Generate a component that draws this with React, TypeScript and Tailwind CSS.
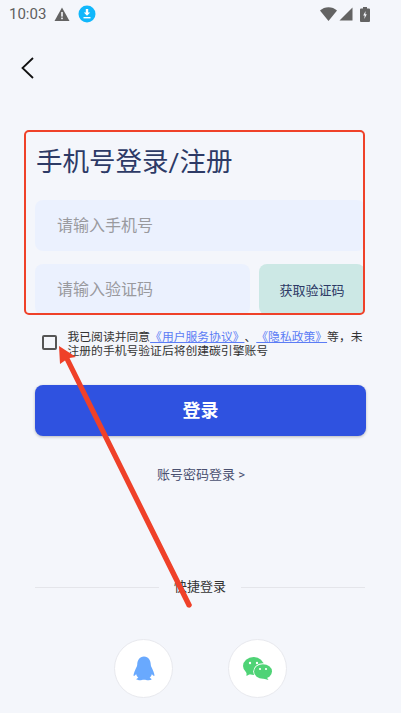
const cjk = "font-['Roboto','Noto_Sans_CJK_SC',sans-serif]"

function StatusBar() {
  return (
    <div className="flex h-[28px] items-center pl-[9px] pr-[31px]">
      <span className="text-[15px] leading-none text-[#5f5f5f]">10:03</span>
      <svg className="ml-[8px]" width="16" height="15" viewBox="0 0 16 15">
        <path d="M8 0.5 L15.5 14 H0.5 Z" fill="#636363" />
        <rect x="7.2" y="5" width="1.6" height="4.6" fill="#f4f6fb" />
        <rect x="7.2" y="10.6" width="1.6" height="1.6" fill="#f4f6fb" />
      </svg>
      <svg className="ml-[8px]" width="18" height="18" viewBox="0 0 18 18">
        <circle cx="9" cy="9" r="8.5" fill="#10b7fb" />
        <path d="M7.8 4 H10.2 V7.6 H12.2 L9 10.8 L5.8 7.6 H7.8 Z" fill="#fff" />
        <rect x="5.5" y="12" width="7" height="1.4" fill="#fff" />
      </svg>
      <div className="ml-auto flex items-center">
        <svg width="17" height="14" viewBox="0 0 17 14">
          <path d="M0 3.6 C4.5 -0.9 12.5 -0.9 17 3.6 L8.5 14 Z" fill="#636363" />
        </svg>
        <svg className="ml-[2px]" width="14" height="14" viewBox="0 0 14 14">
          <path d="M13.5 0.5 V13.5 H0.5 Z" fill="#636363" />
        </svg>
        <svg className="ml-[7px]" width="10" height="15" viewBox="0 0 10 15">
          <path d="M3 0 H7 V1.4 H9 Q10 1.4 10 2.4 V14 Q10 15 9 15 H1 Q0 15 0 14 V2.4 Q0 1.4 1 1.4 H3 Z" fill="#636363" />
          <path d="M5.6 4 L3.2 8.6 H4.7 L4.3 12 L6.8 7.2 H5.3 Z" fill="#f4f6fb" />
        </svg>
      </div>
    </div>
  )
}

function QQIcon() {
  return (
    <svg width="22" height="25" viewBox="0 0 24 27">
      <path
        d="M12 0.5 C17 0.5 19.2 4.5 19.4 9.5 C19.5 11.5 20.5 12.5 21.6 15 C22.8 17.6 23.6 20.2 23.4 21.4 C22.8 22 21.4 20.8 20.6 19.6 C20.2 21.4 19.4 22.6 18.2 23.6 C19.6 24.2 20.6 25 20.2 25.6 C19.6 26.4 17.6 26.4 15.4 26.2 C13.6 26 12.8 25.8 12 25.8 C11.2 25.8 10.4 26 8.6 26.2 C6.4 26.4 4.4 26.4 3.8 25.6 C3.4 25 4.4 24.2 5.8 23.6 C4.6 22.6 3.8 21.4 3.4 19.6 C2.6 20.8 1.2 22 0.6 21.4 C0.4 20.2 1.2 17.6 2.4 15 C3.5 12.5 4.5 11.5 4.6 9.5 C4.8 4.5 7 0.5 12 0.5 Z"
        fill="#69a9fe"
      />
    </svg>
  )
}

function WeChatIcon() {
  return (
    <svg width="29" height="23" viewBox="0 0 29 23">
      <ellipse cx="10.5" cy="9" rx="10.5" ry="9" fill="#4fd376" />
      <path d="M3.5 15 L3.5 19 L8 16.5 Z" fill="#4fd376" />
      <circle cx="7" cy="6" r="1.2" fill="#fff" />
      <circle cx="14" cy="6" r="1.2" fill="#fff" />
      <ellipse cx="20" cy="14.5" rx="9.8" ry="8.2" fill="#fff" />
      <ellipse cx="20" cy="14.5" rx="9" ry="7.3" fill="#4fd376" />
      <path d="M23.5 20 L25.5 23 L20 21.5 Z" fill="#4fd376" />
      <circle cx="17" cy="12" r="1.1" fill="#fff" />
      <circle cx="23" cy="12" r="1.1" fill="#fff" />
    </svg>
  )
}

export default function App() {
  return (
    <div className={`relative h-[713px] w-[401px] overflow-hidden bg-[#f4f6fb] ${cjk}`}>
      <StatusBar />

      <button className="ml-[21px] mt-[29px] block h-[21px] w-[12px]">
        <svg width="13" height="22" viewBox="0 0 13 22" fill="none">
          <path d="M12 1 L1.5 11 L12 21" stroke="#111" strokeWidth="1.8" />
        </svg>
      </button>

      <div className="pl-[35px] pr-[36px]">
        <h1 className="ml-[1px] mt-[68px] text-[26.5px] leading-[32px] text-[#2d3a66]">手机号登录/注册</h1>

        <div className="mt-[22px] flex h-[51px] items-center rounded-lg bg-[#ebf1fe] pl-[22px] text-[16px] text-[#9a9a9e]">
          请输入手机号
        </div>

        <div className="mt-[13px] flex gap-[9px]">
          <div className="flex h-[51px] w-[215px] items-center rounded-lg bg-[#ebf1fe] pl-[22px] text-[16px] text-[#9a9a9e]">
            请输入验证码
          </div>
          <button className="flex h-[51px] w-[106px] items-center justify-center rounded-lg bg-[#cce8e5] pt-[2px] text-[13px] text-[#2d3a66]">
            获取验证码
          </button>
        </div>

        <div className="mt-[15px] flex">
          <div className="ml-[7px] mt-[5px] h-[15px] w-[15px] shrink-0 rounded-[2px] border-2 border-[#555]" />
          <p className="ml-[10.5px] w-[298px] shrink-0 text-[11.8px] leading-[14px] text-[#333] [text-spacing-trim:space-all]">
            我已阅读并同意<span className="text-[#5b7cf5] underline underline-offset-1">《用户服务协议》</span>、<span className="text-[#5b7cf5] underline underline-offset-1">《隐私政策》</span>等，未注册的手机号验证后将创建碳引擎账号
          </p>
        </div>

        <button className="mt-[27px] flex h-[51px] w-[331px] items-center justify-center rounded-lg bg-[#2f52e0] text-[18px] font-bold text-white shadow-[0_1px_3px_rgba(0,0,0,0.25)]">
          登录
        </button>

        <div className="mt-[30px] ml-[122px] text-[13px] leading-[18px] text-[#4a5070]">账号密码登录 &gt;</div>

        <div className="mt-[94px] flex items-center">
          <div className="h-px flex-1 bg-[#e4e5ea]" />
          <span className="px-[15px] text-[13px] leading-[18px] text-[#333]">快捷登录</span>
          <div className="h-px flex-1 bg-[#e4e5ea]" />
        </div>

        <div className="mt-[43px] ml-[79px] flex gap-[55px]">
          <div className="flex h-[59px] w-[59px] items-center justify-center rounded-full border border-[#e8e9ee] bg-white">
            <QQIcon />
          </div>
          <div className="flex h-[59px] w-[59px] items-center justify-center rounded-full border border-[#e8e9ee] bg-white">
            <WeChatIcon />
          </div>
        </div>
      </div>

      {/* red annotation on top of the screenshot */}
      <div className="absolute left-[24px] top-[130px] h-[185px] w-[341px] rounded-[5px] border-2 border-[#ef4129]" />
      <svg className="absolute left-0 top-0" width="401" height="713" viewBox="0 0 401 713">
        <path
          d="M59 346 L76 357 L69.5 358 L192 605 Q191 609 187 607 L65 360.5 L60 364 Z"
          fill="#ef4129"
        />
      </svg>
    </div>
  )
}
